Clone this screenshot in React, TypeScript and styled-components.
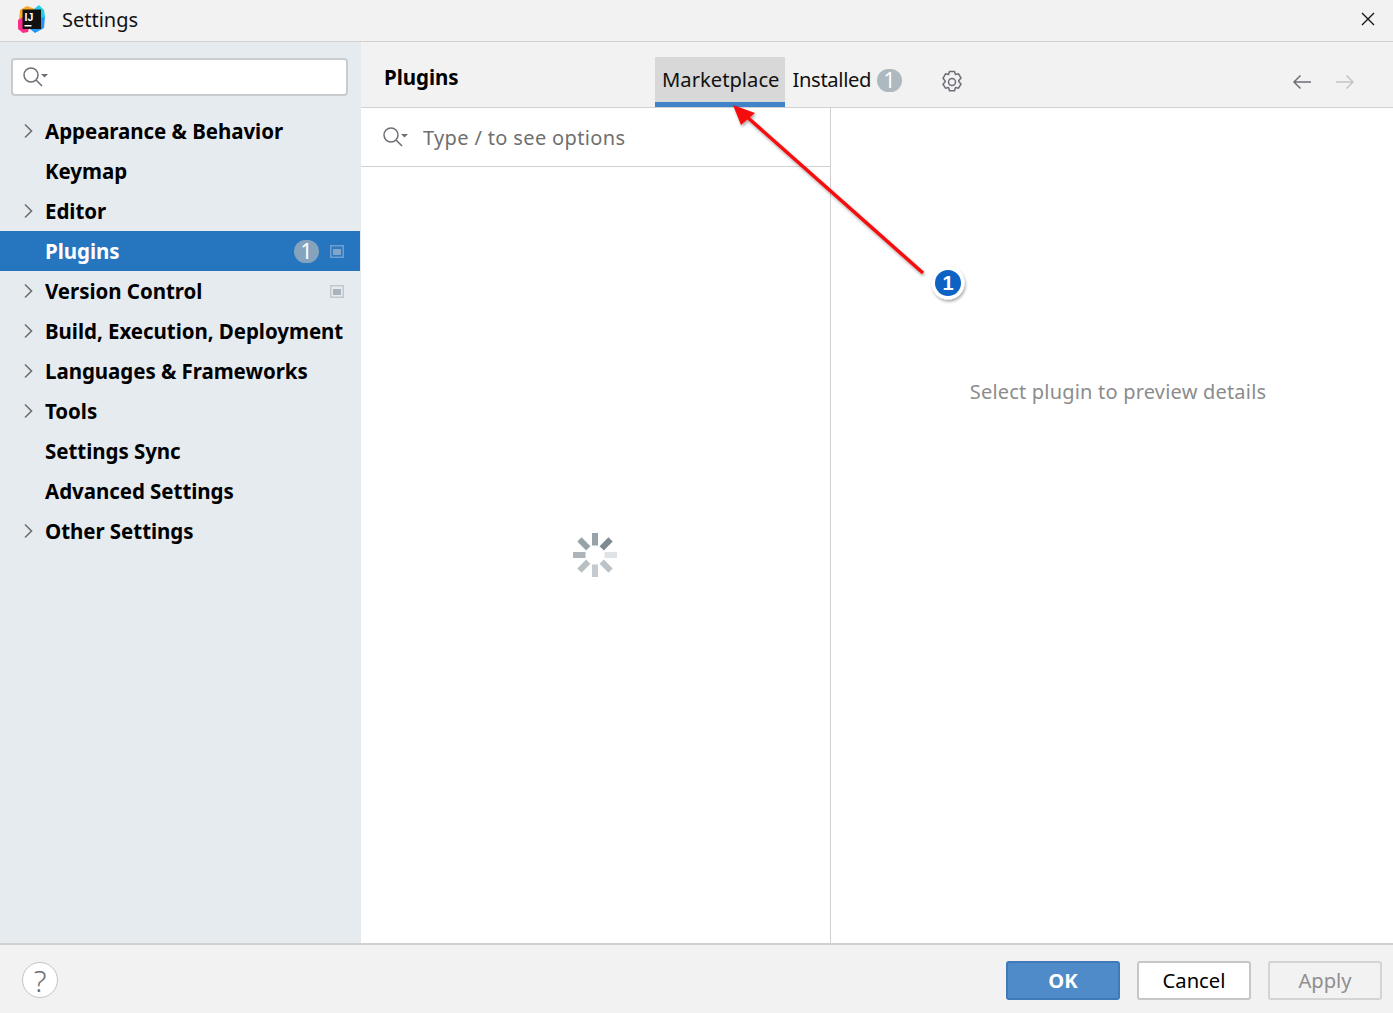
import React from "react";
import styled, { createGlobalStyle } from "styled-components";

const Global = createGlobalStyle`
  html, body { margin: 0; padding: 0; background: #fff; }
  body { font-family: "Noto Sans", "Open Sans", sans-serif; color: #000; }
  * { box-sizing: border-box; }
`;

const Page = styled.div`
  position: relative;
  width: 1393px;
  height: 1013px;
  display: flex;
  flex-direction: column;
  overflow: hidden;
`;
const TitleBar = styled.header`
  height: 42px;
  flex: none;
  background: #f2f2f2;
  border-bottom: 1px solid #d1d1d1;
  display: flex;
  align-items: center;
  padding: 0 18px 4px 18px;
`;
const TitleText = styled.span`
  font-size: 20px;
  margin-left: 17px;
  margin-top: 2px;
  flex: 1;
  color: #111;
`;
const Body = styled.div`
  flex: 1;
  display: flex;
  min-height: 0;
`;
const Sidebar = styled.aside`
  width: 361px;
  flex: none;
  background: #e6ebf0;
  border-right: 1px solid #e6ebf0;
  padding-top: 16px;
  display: flex;
  flex-direction: column;
`;
const SearchBox = styled.div`
  width: 337px;
  height: 38px;
  margin-left: 11px;
  margin-bottom: 15px;
  background: #fff;
  border: 2px solid #c9cccf;
  border-radius: 4px;
  display: flex;
  align-items: center;
  padding-left: 9px;
`;
const Row = styled.div<{ $active?: boolean }>`
  height: 40px;
  display: flex;
  align-items: center;
  padding-left: 23px;
  padding-right: 16px;
  background: ${(p) => (p.$active ? "#2675bf" : "transparent")};
  color: ${(p) => (p.$active ? "#fff" : "#000")};
`;
const Chevron = styled.span`
  width: 22px;
  flex: none;
  display: flex;
  align-items: center;
`;
const RowLabel = styled.span`
  font-size: 20.5px;
  font-weight: 700;
  flex: 1;
  white-space: nowrap;
  padding-bottom: 1px;
  letter-spacing: -0.05px;
`;
const RowBadge = styled.span`
  width: 25px;
  height: 23px;
  border-radius: 12px;
  background: #85a3bd;
  color: #fff;
  font-size: 21px;
  display: flex;
  align-items: center;
  justify-content: center;
  margin-right: 11px;
`;
const Main = styled.main`
  flex: 1;
  display: flex;
  flex-direction: column;
  min-width: 0;
`;
const Header = styled.div`
  height: 66px;
  flex: none;
  background: #f2f2f2;
  border-bottom: 1px solid #d1d1d1;
  display: flex;
  padding: 15px 38px 0 23px;
`;
const HeaderTitle = styled.h2`
  margin: 0;
  width: 271px;
  font-size: 20.5px;
  font-weight: 700;
  line-height: 40px;
  letter-spacing: -0.05px;
  white-space: nowrap;
`;
const Tab = styled.div<{ $selected?: boolean }>`
  height: 50px;
  display: flex;
  align-items: center;
  padding: 0 ${(p) => (p.$selected ? "6px" : "8px")} 1px 7px;
  font-size: 20.2px;
  color: #111;
  white-space: nowrap;
  background: ${(p) => (p.$selected ? "#d8d8d8" : "transparent")};
  border-bottom: ${(p) => (p.$selected ? "5px solid #4083c9" : "5px solid transparent")};
`;
const TabText = styled.span`
  letter-spacing: -0.35px;
`;
const TabBadge = styled.span`
  width: 25px;
  height: 23px;
  border-radius: 12px;
  background: #adb8bf;
  color: #fff;
  font-size: 21px;
  display: flex;
  align-items: center;
  justify-content: center;
  margin-left: 6px;
  margin-top: 2px;
`;
const GearWrap = styled.span`
  margin-left: 31px;
  height: 49px;
  display: flex;
  align-items: center;
`;
const NavIcons = styled.div`
  margin-left: auto;
  height: 49px;
  display: flex;
  align-items: center;
  gap: 23px;
`;
const Panes = styled.div`
  flex: 1;
  display: flex;
  min-height: 0;
`;
const ListPane = styled.section`
  width: 470px;
  flex: none;
  border-right: 1px solid #d1d1d1;
  display: flex;
  flex-direction: column;
`;
const ListSearch = styled.div`
  height: 59px;
  flex: none;
  border-bottom: 1px solid #d1d1d1;
  display: flex;
  align-items: center;
  padding-left: 21px;
  gap: 14px;
  font-size: 20px;
  letter-spacing: 0.35px;
  color: #6f6f6f;
`;
const Loading = styled.div`
  flex: 1;
  display: flex;
  align-items: center;
  justify-content: center;
  padding-right: 1px;
`;
const DetailPane = styled.section`
  flex: 1;
  display: flex;
  justify-content: center;
  padding: 270px 0 0 12px;
  font-size: 20px;
  letter-spacing: 0.2px;
  color: #8c8c8c;
`;
const Footer = styled.footer`
  height: 70px;
  flex: none;
  background: #f2f2f2;
  border-top: 2px solid #d1d1d1;
  display: flex;
  align-items: center;
  padding: 2px 11px 0 22px;
`;
const Help = styled.button`
  width: 36px;
  height: 36px;
  border-radius: 50%;
  background: #fff;
  border: 1px solid #c4c4c4;
  padding: 0;
  font: 300 30px "Noto Sans", sans-serif;
  color: #6e6e78;
  display: flex;
  align-items: center;
  justify-content: center;
  margin-right: auto;
`;
const Button = styled.button<{ $kind?: "primary" | "disabled" }>`
  width: 114px;
  height: 39px;
  margin-left: 17px;
  border-radius: 3px;
  padding: 0 0 1px;
  font-family: "Noto Sans", sans-serif;
  font-size: 20.2px;
  font-weight: ${(p) => (p.$kind === "primary" ? 700 : 400)};
  color: ${(p) => (p.$kind === "primary" ? "#fff" : p.$kind === "disabled" ? "#8f8f8f" : "#000")};
  background: ${(p) => (p.$kind === "primary" ? "#4f8ac9" : p.$kind === "disabled" ? "#f2f2f2" : "#fff")};
  border: 2px solid ${(p) => (p.$kind === "primary" ? "#3f79b8" : p.$kind === "disabled" ? "#d4d4d4" : "#c6c6c6")};
`;
const Overlay = styled.svg`
  position: absolute;
  left: 0;
  top: 0;
  pointer-events: none;
`;

const SearchIcon = ({ color = "#6e6e78" }: { color?: string }) => (
  <svg width="27" height="22" viewBox="0 0 27 22" fill="none">
    <circle cx="9" cy="9" r="7" stroke={color} strokeWidth="1.5" />
    <path d="M14 14l6 6" stroke={color} strokeWidth="1.6" />
    <path d="M19 8h7l-3.5 3.5z" fill={color} />
  </svg>
);
const Arrow = () => (
  <svg width="11" height="16" viewBox="0 0 11 16" fill="none">
    <path d="M2 1.5l6.5 6.5L2 14.5" stroke="#6e6e6e" strokeWidth="1.6" />
  </svg>
);
const Pin = ({ active }: { active?: boolean }) => (
  <svg width="14" height="13" viewBox="0 0 14 13">
    <rect width="14" height="13" fill={active ? "#6d9fd0" : "#c2c8ce"} />
    <rect x="1.5" y="1.5" width="11" height="10" fill={active ? "#2f78be" : "#e6ebf0"} />
    <rect x="3" y="4" width="8" height="6" fill={active ? "#7fa5c8" : "#a9b3bc"} />
  </svg>
);
const Logo = () => (
  <svg width="27" height="28" viewBox="0 0 27 28">
    <path d="M2 5l7-4 8 3-10 12H1z" fill="#f9a825" />
    <path d="M0 15l5-3 6 11-1 4-5 1-5-4z" fill="#ff2d8a" />
    <path d="M23 8l4 3-1 12-9 5-5-4 5-6z" fill="#2196f3" />
    <path d="M16 4l5-4 5 5 1 7-6 1z" fill="#21d0e8" />
    <rect x="4.500" y="4.500" width="18.500" height="19.500" fill="#111" />
    <rect x="6.500" y="20" width="7" height="1.500" fill="#fff" />
    <text x="6.500" y="15.500" fill="#fff" fontSize="10.500" fontWeight="700" fontFamily="Liberation Sans, sans-serif">IJ</text>
  </svg>
);
const Gear = () => (
  <svg width="22" height="24" viewBox="0 0 22 24" fill="none" stroke="#6e6e78" strokeWidth="1.5">
    <path d="M8.5 1.5h5l1 3 3-.7 2.5 4.2-2.2 2.6 0 .8 2.2 2.6-2.5 4.2-3-.7-1 3.2h-5l-1-3.2-3 .7L2 14.3l2.200-2.600 0-.8L2 8.300 4.500 3.800l3 .7z" strokeLinejoin="round" />
    <circle cx="11" cy="12" r="3.500" />
  </svg>
);
const Close = () => (
  <svg width="14" height="14" viewBox="0 0 14 14" stroke="#111" strokeWidth="1.3">
    <path d="M1 1l12 12M13 1L1 13" />
  </svg>
);
const NavArrow = ({ dir, color }: { dir: "left" | "right"; color: string }) => (
  <svg width="20" height="16" viewBox="0 0 20 16" fill="none" stroke={color} strokeWidth="1.5">
    {dir === "left" ? <path d="M19 8H2M8.500 1.500L2 8l6.500 6.500" /> : <path d="M1 8h17M11.500 1.500L18 8l-6.500 6.500" />}
  </svg>
);
const Spinner = () => (
  <svg width="44" height="44" viewBox="-22 -22 44 44">
    {[0, 45, 90, 135, 180, 225, 270, 315].map((a, i) => {
      const c = ["#98a2a9", "#7f8b93", "#dfe3e5", "#bcc3c8", "#c4cace", "#b8c0c4", "#adb5ba", "#98a2a9"][i];
      return <rect key={a} x="-3" y="-22" width="6" height="12.500" fill={c} transform={`rotate(${a})`} />;
    })}
  </svg>
);

const items = [
  { label: "Appearance & Behavior", arrow: true },
  { label: "Keymap" },
  { label: "Editor", arrow: true },
  { label: "Plugins", active: true, badge: true, pin: true },
  { label: "Version Control", arrow: true, pin: true },
  { label: "Build, Execution, Deployment", arrow: true },
  { label: "Languages & Frameworks", arrow: true },
  { label: "Tools", arrow: true },
  { label: "Settings Sync" },
  { label: "Advanced Settings" },
  { label: "Other Settings", arrow: true },
];

export default function App() {
  return (
    <Page>
      <Global />
      <TitleBar>
        <Logo />
        <TitleText>Settings</TitleText>
        <Close />
      </TitleBar>
      <Body>
        <Sidebar>
          <SearchBox>
            <SearchIcon />
          </SearchBox>
          {items.map((it) => (
            <Row key={it.label} $active={it.active}>
              <Chevron>{it.arrow && <Arrow />}</Chevron>
              <RowLabel>{it.label}</RowLabel>
              {it.badge && <RowBadge>1</RowBadge>}
              {it.pin && <Pin active={it.active} />}
            </Row>
          ))}
        </Sidebar>
        <Main>
          <Header>
            <HeaderTitle>Plugins</HeaderTitle>
            <Tab $selected>Marketplace</Tab>
            <Tab>
              <TabText>Installed</TabText>
              <TabBadge>1</TabBadge>
            </Tab>
            <GearWrap>
              <Gear />
            </GearWrap>
            <NavIcons>
              <NavArrow dir="left" color="#6e6e78" />
              <NavArrow dir="right" color="#c4c4c8" />
            </NavIcons>
          </Header>
          <Panes>
            <ListPane>
              <ListSearch>
                <SearchIcon />
                Type / to see options
              </ListSearch>
              <Loading>
                <Spinner />
              </Loading>
            </ListPane>
            <DetailPane>Select plugin to preview details</DetailPane>
          </Panes>
        </Main>
      </Body>
      <Footer>
        <Help>?</Help>
        <Button $kind="primary">OK</Button>
        <Button>Cancel</Button>
        <Button $kind="disabled">Apply</Button>
      </Footer>
      <Overlay width="1393" height="1013" viewBox="0 0 1393 1013">
        <defs>
          <filter id="sh" x="-20%" y="-20%" width="140%" height="140%">
            <feDropShadow dx="1" dy="2" stdDeviation="1.500" floodColor="#000" floodOpacity="0.35" />
          </filter>
        </defs>
        <g filter="url(#sh)">
          <path d="M923 273L746 116" stroke="#f50d0d" strokeWidth="3.500" />
          <path d="M733 105L755 113 741 125z" fill="#f50d0d" />
        </g>
        <g filter="url(#sh)">
          <circle cx="948" cy="283" r="16.500" fill="#fff" />
          <circle cx="948" cy="283" r="13" fill="#0a62c4" />
        </g>
        <text x="948" y="290" textAnchor="middle" fill="#fff" fontSize="20" fontWeight="700" fontFamily="Liberation Sans, sans-serif">1</text>
      </Overlay>
    </Page>
  );
}
